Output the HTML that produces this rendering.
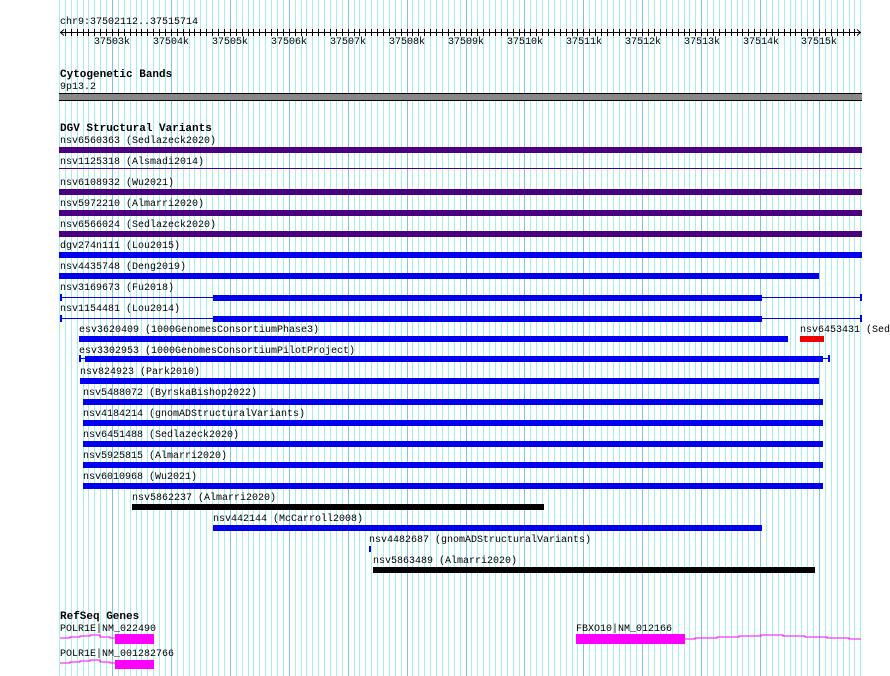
<!DOCTYPE html>
<html><head><meta charset="utf-8">
<style>
body{margin:0;width:890px;height:676px;background:#fff;position:relative;overflow:hidden;font-family:"Liberation Mono",monospace;font-size:10px;color:#000}
#g{position:absolute;left:0;top:0}
.t{position:absolute;white-space:nowrap;line-height:11px;font-size:10px;margin-top:2px}
.h{position:absolute;white-space:nowrap;font-weight:bold;font-size:11px;line-height:12px;margin-top:2px}
.b{position:absolute;height:6px}
.p{background:#4b0082}.bl{background:#0000ee}.k{background:#000}.r{background:#ee0000}.m{background:#ff00ff}
.ln{position:absolute;height:1px}
</style></head><body>
<svg id="g" width="890" height="676"></svg>
<script>
(function(){var s=document.getElementById('g'),h='';
for(var k=-9;k<=127;k++){var x=Math.round(112+5.892*k);if(x>860)break;var maj=(k%10===0);
h+='<rect x="'+x+'" y="0" width="1" height="676" fill="'+(maj?'#7cc4ee':'#a4eef0')+'"/>';
if(x>60&&x<860)h+='<rect x="'+x+'" y="29" width="1" height="7" fill="#000"/>';}
s.innerHTML=h;})();
</script>
<svg style="position:absolute;left:0;top:0" width="890" height="110">
<line x1="60" y1="32.5" x2="861" y2="32.5" stroke="#000"/>
<polyline points="64,29.5 60.5,32.5 64,35.5" fill="none" stroke="#000"/>
<polyline points="857,29.5 860.5,32.5 857,35.5" fill="none" stroke="#000"/>
<rect x="59" y="93" width="803" height="8" fill="#888"/>
<rect x="59" y="93" width="803" height="1" fill="#000"/>
<rect x="59" y="100" width="803" height="1" fill="#000"/>
</svg>
<div class="t" style="left:60px;top:15px">chr9:37502112..37515714</div>
<div class="t" style="left:94px;top:35px">37503k</div>
<div class="t" style="left:153px;top:35px">37504k</div>
<div class="t" style="left:212px;top:35px">37505k</div>
<div class="t" style="left:271px;top:35px">37506k</div>
<div class="t" style="left:330px;top:35px">37507k</div>
<div class="t" style="left:389px;top:35px">37508k</div>
<div class="t" style="left:448px;top:35px">37509k</div>
<div class="t" style="left:507px;top:35px">37510k</div>
<div class="t" style="left:566px;top:35px">37511k</div>
<div class="t" style="left:625px;top:35px">37512k</div>
<div class="t" style="left:684px;top:35px">37513k</div>
<div class="t" style="left:743px;top:35px">37514k</div>
<div class="t" style="left:801px;top:35px">37515k</div>

<div class="h" style="left:60px;top:67px">Cytogenetic Bands</div>
<div class="t" style="left:60px;top:80px">9p13.2</div>

<div class="h" style="left:60px;top:121px">DGV Structural Variants</div>

<div class="t" style="left:60px;top:134px">nsv6560363 (Sedlazeck2020)</div>
<div class="b p" style="left:59px;top:147px;width:803px"></div>
<div class="t" style="left:60px;top:155px">nsv1125318 (Alsmadi2014)</div>
<div class="ln p" style="left:59px;top:168px;width:803px"></div>
<div class="t" style="left:60px;top:176px">nsv6108932 (Wu2021)</div>
<div class="b p" style="left:59px;top:189px;width:803px"></div>
<div class="t" style="left:60px;top:197px">nsv5972210 (Almarri2020)</div>
<div class="b p" style="left:59px;top:210px;width:803px"></div>
<div class="t" style="left:60px;top:218px">nsv6566024 (Sedlazeck2020)</div>
<div class="b p" style="left:59px;top:231px;width:803px"></div>
<div class="t" style="left:60px;top:239px">dgv274n111 (Lou2015)</div>
<div class="b bl" style="left:59px;top:252px;width:803px"></div>
<div class="t" style="left:60px;top:260px">nsv4435748 (Deng2019)</div>
<div class="b bl" style="left:59px;top:273px;width:760px"></div>
<div class="t" style="left:60px;top:281px">nsv3169673 (Fu2018)</div>
<div class="ln bl" style="left:60px;top:297px;width:802px"></div>
<div class="bl" style="position:absolute;left:60px;top:294px;width:2px;height:7px"></div>
<div class="bl" style="position:absolute;left:860px;top:294px;width:2px;height:7px"></div>
<div class="b bl" style="left:213px;top:295px;width:549px"></div>
<div class="t" style="left:60px;top:302px">nsv1154481 (Lou2014)</div>
<div class="ln bl" style="left:60px;top:318px;width:802px"></div>
<div class="bl" style="position:absolute;left:60px;top:315px;width:2px;height:7px"></div>
<div class="bl" style="position:absolute;left:860px;top:315px;width:2px;height:7px"></div>
<div class="b bl" style="left:213px;top:316px;width:549px"></div>
<div class="t" style="left:79px;top:323px">esv3620409 (1000GenomesConsortiumPhase3)</div>
<div class="t" style="left:800px;top:323px">nsv6453431 (Sed</div>
<div class="b bl" style="left:79px;top:336px;width:709px"></div>
<div class="b r" style="left:800px;top:336px;width:24px"></div>
<div class="t" style="left:79px;top:344px">esv3302953 (1000GenomesConsortiumPilotProject)</div>
<div class="ln bl" style="left:79px;top:358px;width:751px"></div>
<div class="bl" style="position:absolute;left:79px;top:355px;width:2px;height:7px"></div>
<div class="bl" style="position:absolute;left:828px;top:355px;width:2px;height:7px"></div>
<div class="b bl" style="left:85px;top:356px;width:738px"></div>
<div class="t" style="left:80px;top:365px">nsv824923 (Park2010)</div>
<div class="b bl" style="left:80px;top:378px;width:739px"></div>
<div class="t" style="left:83px;top:386px">nsv5488072 (ByrskaBishop2022)</div>
<div class="b bl" style="left:83px;top:399px;width:740px"></div>
<div class="t" style="left:83px;top:407px">nsv4184214 (gnomADStructuralVariants)</div>
<div class="b bl" style="left:83px;top:420px;width:740px"></div>
<div class="t" style="left:83px;top:428px">nsv6451488 (Sedlazeck2020)</div>
<div class="b bl" style="left:83px;top:441px;width:740px"></div>
<div class="t" style="left:83px;top:449px">nsv5925815 (Almarri2020)</div>
<div class="b bl" style="left:83px;top:462px;width:740px"></div>
<div class="t" style="left:83px;top:470px">nsv6010968 (Wu2021)</div>
<div class="b bl" style="left:83px;top:483px;width:740px"></div>
<div class="t" style="left:132px;top:491px">nsv5862237 (Almarri2020)</div>
<div class="b k" style="left:132px;top:504px;width:412px"></div>
<div class="t" style="left:213px;top:512px">nsv442144 (McCarroll2008)</div>
<div class="b bl" style="left:213px;top:525px;width:549px"></div>
<div class="t" style="left:369px;top:533px">nsv4482687 (gnomADStructuralVariants)</div>
<div class="b bl" style="left:369px;top:546px;width:2px"></div>
<div class="t" style="left:373px;top:554px">nsv5863489 (Almarri2020)</div>
<div class="b k" style="left:373px;top:567px;width:442px"></div>

<div class="h" style="left:60px;top:609px">RefSeq Genes</div>
<div class="t" style="left:60px;top:622px">POLR1E|NM_022490</div>
<div class="t" style="left:60px;top:647px">POLR1E|NM_001282766</div>
<div class="t" style="left:576px;top:622px">FBXO10|NM_012166</div>
<svg style="position:absolute;left:0;top:600px" width="890" height="76">
<polyline points="60,38 70,38 70,37 80,37 80,36 90,36 90,35 100,35 100,37 110,37 110,38 115,38" fill="none" stroke="#ff00ff"/>
<polyline points="60,63 70,63 70,62 80,62 80,61 90,61 90,60 100,60 100,62 110,62 110,63 115,63" fill="none" stroke="#ff00ff"/>
<rect x="115" y="34" width="39" height="10" fill="#ff00ff"/>
<rect x="115" y="60" width="39" height="9" fill="#ff00ff"/>
<rect x="576" y="34" width="109" height="10" fill="#ff00ff"/>
<polyline points="685,39 695,39 695,38 717,38 717,37 739,37 739,36 761,36 761,35 783,35 783,36 805,36 805,37 827,37 827,38 849,38 849,39 861,39" fill="none" stroke="#ff00ff"/>
</svg>
</body></html>
